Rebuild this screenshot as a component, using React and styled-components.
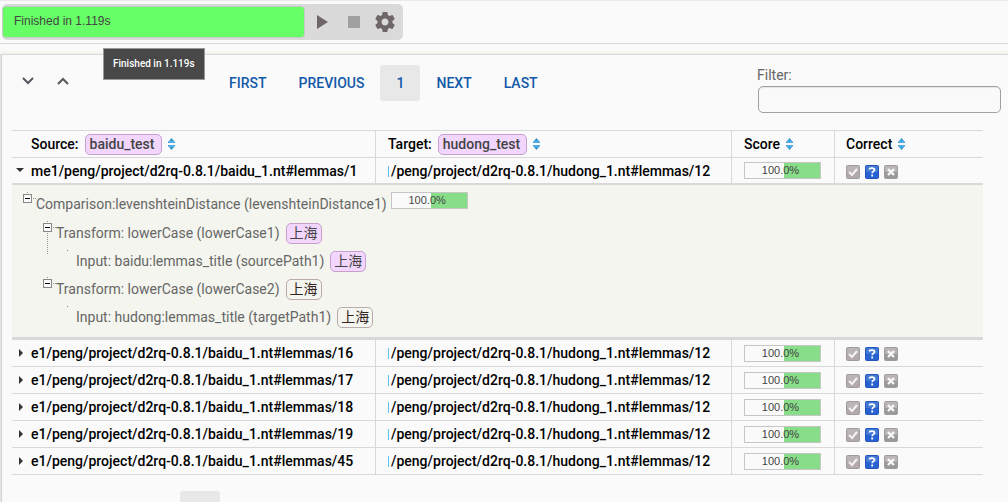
import React, { Fragment, useState } from "react";
import styled, { createGlobalStyle } from "styled-components";

const GlobalStyle = createGlobalStyle`
  *, *::before, *::after { box-sizing: border-box; }
  html, body { margin: 0; padding: 0; }
  body {
    background: #fafafa;
    color: #666;
    font-family: Roboto, "Noto Sans CJK SC", sans-serif;
    font-size: 14px;
    line-height: 20px;
  }
  button, input { font: inherit; }
`;

const Page = styled.div`
  height: 100vh;
  overflow: hidden;
  border-top: 1px solid #e9e9e9;
`;

const Toolbar = styled.header`
  position: relative;
  height: 43px;
  padding: 3px 2px;
  border-bottom: 1px solid #dbdbdb;
`;

const TaskBar = styled.div`
  display: inline-flex;
  align-items: center;
  height: 36px;
  padding: 2px 3px 2px 0;
  border-radius: 5px;
  background: #dadada;
`;

const Status = styled.div`
  width: 303px;
  height: 32px;
  padding: 4px 11px;
  border: 1px solid #c2ccc2;
  border-radius: 4px;
  background: #66ff66;
  color: #444;
  font: 12px/20px "Liberation Sans", sans-serif;
`;

const ToolButton = styled.button`
  display: flex;
  align-items: center;
  justify-content: center;
  width: 31px;
  height: 32px;
  padding: 0;
  border: 0;
  background: none;
  color: #6f6668;
  &:first-of-type { margin-left: 2px; }
  &:disabled { color: #a0a0a0; }
`;

const Tooltip = styled.div`
  position: absolute;
  z-index: 2;
  top: 47px;
  left: 103px;
  padding: 5px 9px;
  border: 1px solid #999;
  background: #484848;
  color: #fff;
  font-size: 10px;
  font-weight: 500;
  line-height: 20px;
  white-space: nowrap;
`;

const Panel = styled.main`
  margin: 10px 0 0 1px;
  padding: 10px 0 0 9px;
  border-top: 1px solid #d8d8d8;
  border-left: 1px solid #d2d2d2;
  box-shadow: 0 -2px 2px #f2f2ea, -1px 0 0 #dedede;
`;

const Controls = styled.div`
  display: flex;
  align-items: flex-start;
  height: 65px;
  padding: 0 7px 0 1px;
`;

const Expanders = styled.div`
  display: flex;
  gap: 3px;
  width: 200px;
`;

const ExpandAll = styled.button`
  display: flex;
  align-items: center;
  justify-content: center;
  width: 32px;
  height: 32px;
  padding: 0;
  border: 0;
  background: none;
  color: #56565c;
`;

const PagerNav = styled.nav`
  display: flex;
  padding-left: 1px;
`;

const PageButton = styled.button`
  min-width: 40px;
  height: 36px;
  padding: 0 16px;
  border: 0;
  border-radius: 3px;
  background: ${(p) => (p.$current ? "#e8e8e8" : "transparent")};
  color: #1259a8;
  font-weight: 500;
`;

const Filter = styled.label`
  display: flex;
  flex-direction: column;
  width: 244px;
  margin-left: auto;
`;

const FilterInput = styled.input`
  height: 27px;
  margin: 1px 0 0 1px;
  padding: 0 8px;
  border: 1px solid #a69fa1;
  border-radius: 5px;
  background: #fafafa;
  box-shadow: inset 0 1px 1px #e4e4e4;
`;

const TableWrap = styled.div`
  padding: 0 25px 16px 1px;
`;

const Links = styled.table`
  width: 100%;
  table-layout: fixed;
  border-collapse: separate;
  border-spacing: 0;
  border-top: 1px solid #d8d8d8;
  color: #000;
`;

const Column = styled.col`
  width: ${(p) => p.$width};
`;

const cellBorder = "1px solid #d8d8d8";

const HeadCell = styled.th`
  height: 27px;
  padding: 0 0 0 ${(p) => (p.$first ? "19px" : p.$last ? "11px" : "12px")};
  border-bottom: ${cellBorder};
  border-right: ${(p) => (p.$last ? "0" : cellBorder)};
  font-weight: 500;
  text-align: left;
`;

const HeadContent = styled.div`
  display: flex;
  align-items: center;
  gap: 6px;
  height: 26px;
`;

const Cell = styled.td`
  height: 27px;
  padding: 0 12px 0 ${(p) => (p.$first ? "0" : p.$last ? "11px" : "12px")};
  border-bottom: ${(p) => (p.$open ? "2px solid #d8d8d8" : cellBorder)};
  border-right: ${(p) => (p.$last ? "0" : cellBorder)};
  font-weight: 500;
`;

const SourceContent = styled.div`
  display: flex;
  align-items: center;
`;

const RowToggle = styled.button`
  display: flex;
  flex: none;
  align-items: center;
  justify-content: center;
  width: 16px;
  height: 20px;
  margin-right: 3px;
  padding: 0;
  border: 0;
  background: none;
  color: #333;
`;

const SourceUri = styled.div`
  flex: 1;
  min-width: 0;
  overflow: hidden;
  white-space: nowrap;
`;

const TargetUri = styled.div`
  overflow: hidden;
  padding-left: 3px;
  background: linear-gradient(#5cc4ee, #5cc4ee) 0 5px / 1px 11px no-repeat;
  white-space: nowrap;
`;

const Tag = styled.span`
  display: inline-block;
  height: 21px;
  padding: ${(p) => (p.$heading ? "0 6px 0 4px" : "0 3px")};
  border: 1px solid ${(p) => (p.$plain ? "#b8aaae" : "#c9a0cc")};
  border-radius: 5px;
  background: ${(p) => (p.$plain ? "transparent" : "#f2d6fd")};
  color: ${(p) => (p.$plain ? "#33241f" : "#444")};
  line-height: 19px;
`;

const Score = styled.div`
  width: 77px;
  height: 17px;
  padding-right: 4px;
  border: 1px solid #c6c6c6;
  background: linear-gradient(90deg, #fafafa 39px, #88dd88 39px);
  color: #444;
  font: 11px/15px "Liberation Sans", sans-serif;
  text-align: center;
`;

const Actions = styled.div`
  display: flex;
  gap: 5px;
  padding-top: 2px;
`;

const Mark = styled.button`
  display: flex;
  width: 14px;
  height: 14px;
  padding: 0;
  border: 0;
  background: none;
`;

const DetailCell = styled.td`
  padding: 4px 0 6px 11px;
  border-bottom: 3px solid #d8d8d8;
  background: #f4f5ee;
  color: #666;
`;

const Tree = styled.ul`
  margin: 0;
  padding: 0 0 0 ${(p) => (p.$nested ? "20px" : "0")};
  list-style: none;
`;

const TreeLine = styled.div`
  display: flex;
  align-items: center;
  gap: ${(p) => (p.$root ? "4px" : "6px")};
  height: ${(p) => (p.$root ? "30px" : "28px")};
`;

const TreeLabel = styled.span`
  display: flex;
  align-items: center;
  white-space: nowrap;
`;

const TreeToggle = styled.button`
  width: 13px;
  height: 28px;
  padding: 0;
  border: 0;
  background: none;
  svg { display: block; }
`;

const Scored = styled.div`
  height: 24px;
`;

function SortIcon() {
  return (
    <svg width="7" height="12" viewBox="0 0 7 12" aria-hidden="true">
      <path d="M3.5 0 7 4v1H0V4Z" fill="#3e9ad2" />
      <path d="M0 7h7v1l-3.5 4L0 8Z" fill="#3e9ad2" />
      <path d="M1 4h5M1 8h5" stroke="#65c4f4" />
    </svg>
  );
}

function GearIcon() {
  return (
    <svg width="22" height="22" viewBox="1 1 22 22" fill="currentColor" aria-hidden="true">
      <path d="M19.43 12.98c.04-.32.07-.64.07-.98s-.03-.66-.07-.98l2.11-1.65c.19-.15.24-.42.12-.64l-2-3.46c-.12-.22-.39-.3-.61-.22l-2.49 1c-.52-.4-1.08-.73-1.69-.98l-.38-2.65C14.46 2.18 14.25 2 14 2h-4c-.25 0-.46.18-.49.42l-.38 2.65c-.61.25-1.17.59-1.69.98l-2.49-1c-.23-.09-.49 0-.61.22l-2 3.46c-.13.22-.07.49.12.64l2.11 1.65c-.04.32-.07.65-.07.98s.03.66.07.98l-2.11 1.65c-.19.15-.24.42-.12.64l2 3.46c.12.22.39.3.61.22l2.49-1c.52.4 1.08.73 1.69.98l.38 2.65c.03.24.24.42.49.42h4c.25 0 .46-.18.49-.42l.38-2.65c.61-.25 1.17-.59 1.69-.98l2.49 1c.23.09.49 0 .61-.22l2-3.46c.12-.22.07-.49-.12-.64l-2.11-1.65zM12 15.5c-1.93 0-3.5-1.57-3.5-3.5s1.57-3.5 3.5-3.5 3.5 1.57 3.5 3.5-1.57 3.5-3.5 3.5z" />
    </svg>
  );
}

function Chevron({ up }) {
  return (
    <svg width="12" height="8" viewBox="0 0 12 8" fill="none" stroke="currentColor" strokeWidth="2" aria-hidden="true">
      <path d={up ? "M1 7l5-5 5 5" : "M1 1l5 5 5-5"} />
    </svg>
  );
}

function MarkIcon({ kind }) {
  const active = kind === "unsure";
  return (
    <svg width="14" height="14" viewBox="0 0 14 14" fill="none" aria-hidden="true">
      <rect width="14" height="14" rx="2" fill={active ? "#2454bd" : "#a09c9e"} />
      <rect x="1" y="1" width="12" height="6" rx="1" fill={active ? "#4479d4" : "#bbb5b8"} />
      <rect x="1" y="7" width="12" height="6" rx="1" fill={active ? "#2861d0" : kind === "correct" ? "#b4a9ad" : "#999"} />
      {kind === "correct" && <path d="M3 7l3 3 5-6" stroke="#f4f4f4" strokeWidth="2" />}
      {active && <path d="M4.5 4.5c0-2 5-2 5 .3 0 1.6-2.3 1.6-2.3 3.4M7.2 9.5v2" stroke="#fff" strokeWidth="1.8" />}
      {kind === "wrong" && <path d="M4 4l6 6M10 4l-6 6" stroke="#f8f8f8" strokeWidth="2.4" />}
    </svg>
  );
}

function Branch({ leaf, line }) {
  if (leaf) {
    return (
      <svg width="13" height="28" aria-hidden="true">
        <rect x="4" y="3" width="1" height="1" fill="#888" />
      </svg>
    );
  }
  return (
    <svg width="13" height="28" fill="none" aria-hidden="true" overflow="visible">
      <path d="M4.500 2v2M10 8.500h4" stroke="#999" strokeDasharray="1 1" />
      {line && <path d="M4.500 14v22" stroke="#999" strokeDasharray="1 1" />}
      <rect x="0.500" y="4.500" width="8" height="8" fill="#fafafa" stroke="#888" />
      <path d="M2 8.500h5" stroke="#000" />
    </svg>
  );
}

function Pager() {
  return (
    <PagerNav aria-label="Pages">
      <PageButton>FIRST</PageButton>
      <PageButton>PREVIOUS</PageButton>
      <PageButton $current aria-current="page">1</PageButton>
      <PageButton>NEXT</PageButton>
      <PageButton>LAST</PageButton>
    </PagerNav>
  );
}

function TreeNode({ label, value, plain, score, line, children }) {
  return (
    <li>
      <TreeLine $root={Boolean(score)}>
        <TreeLabel>
          <TreeToggle aria-label={label}>
            <Branch leaf={!children} line={line} />
          </TreeToggle>
          {label}
        </TreeLabel>
        {value && <Tag $plain={plain}>{value}</Tag>}
        {score && <Scored><Score>{score}</Score></Scored>}
      </TreeLine>
      {children && <Tree $nested>{children}</Tree>}
    </li>
  );
}

function Details() {
  return (
    <Tree>
      <TreeNode label="Comparison:levenshteinDistance (levenshteinDistance1)" score="100.0%">
        <TreeNode label="Transform: lowerCase (lowerCase1)" value="上海" line>
          <TreeNode label="Input: baidu:lemmas_title (sourcePath1)" value="上海" />
        </TreeNode>
        <TreeNode label="Transform: lowerCase (lowerCase2)" value="上海" plain>
          <TreeNode label="Input: hudong:lemmas_title (targetPath1)" value="上海" plain />
        </TreeNode>
      </TreeNode>
    </Tree>
  );
}

const rows = [
  "me1/peng/project/d2rq-0.8.1/baidu_1.nt#lemmas/1",
  "e1/peng/project/d2rq-0.8.1/baidu_1.nt#lemmas/16",
  "e1/peng/project/d2rq-0.8.1/baidu_1.nt#lemmas/17",
  "e1/peng/project/d2rq-0.8.1/baidu_1.nt#lemmas/18",
  "e1/peng/project/d2rq-0.8.1/baidu_1.nt#lemmas/19",
  "e1/peng/project/d2rq-0.8.1/baidu_1.nt#lemmas/45",
];

export default function App() {
  const [opened, setOpened] = useState(0);
  return (
    <Page>
      <GlobalStyle />
      <Toolbar>
        <TaskBar>
          <Status role="status">Finished in 1.119s</Status>
          <ToolButton aria-label="Start">
            <svg width="12" height="14" fill="currentColor"><path d="M0 0v14l11-7Z" /></svg>
          </ToolButton>
          <ToolButton aria-label="Stop" disabled>
            <svg width="12" height="12" fill="currentColor"><path d="M0 0h12v12H0Z" /></svg>
          </ToolButton>
          <ToolButton aria-label="Settings"><GearIcon /></ToolButton>
        </TaskBar>
        <Tooltip role="tooltip">Finished in 1.119s</Tooltip>
      </Toolbar>
      <Panel>
        <Controls>
          <Expanders>
            <ExpandAll aria-label="Expand all"><Chevron /></ExpandAll>
            <ExpandAll aria-label="Collapse all"><Chevron up /></ExpandAll>
          </Expanders>
          <Pager />
          <Filter>
            Filter:
            <FilterInput type="text" />
          </Filter>
        </Controls>
        <TableWrap>
          <Links>
            <colgroup>
              <Column $width="364px" />
              <Column $width="356px" />
              <Column $width="103px" />
              <Column $width="auto" />
            </colgroup>
            <thead>
              <tr>
                <HeadCell $first><HeadContent>Source: <Tag $heading>baidu_test</Tag><SortIcon /></HeadContent></HeadCell>
                <HeadCell><HeadContent>Target: <Tag $heading>hudong_test</Tag><SortIcon /></HeadContent></HeadCell>
                <HeadCell><HeadContent>Score <SortIcon /></HeadContent></HeadCell>
                <HeadCell $last><HeadContent>Correct <SortIcon /></HeadContent></HeadCell>
              </tr>
            </thead>
            <tbody>
              {rows.map((source, i) => {
                const open = opened === i;
                return (
                  <Fragment key={source}>
                    <tr>
                      <Cell $first $open={open}>
                        <SourceContent>
                          <RowToggle aria-expanded={open} aria-label="Details" onClick={() => setOpened(open ? -1 : i)}>
                            <svg width="8" height="8" fill="currentColor"><path d={open ? "M0 1h8L4 5Z" : "M3 0v8l4-4Z"} /></svg>
                          </RowToggle>
                          <SourceUri>{source}</SourceUri>
                        </SourceContent>
                      </Cell>
                      <Cell $open={open}><TargetUri>/peng/project/d2rq-0.8.1/hudong_1.nt#lemmas/12</TargetUri></Cell>
                      <Cell $open={open}><Score>100.0%</Score></Cell>
                      <Cell $open={open} $last>
                        <Actions>
                          <Mark aria-label="Correct"><MarkIcon kind="correct" /></Mark>
                          <Mark aria-label="Unsure"><MarkIcon kind="unsure" /></Mark>
                          <Mark aria-label="Incorrect"><MarkIcon kind="wrong" /></Mark>
                        </Actions>
                      </Cell>
                    </tr>
                    {open && <tr><DetailCell colSpan={4}><Details /></DetailCell></tr>}
                  </Fragment>
                );
              })}
            </tbody>
          </Links>
        </TableWrap>
        <TableWrap><Pager /></TableWrap>
      </Panel>
    </Page>
  );
}
